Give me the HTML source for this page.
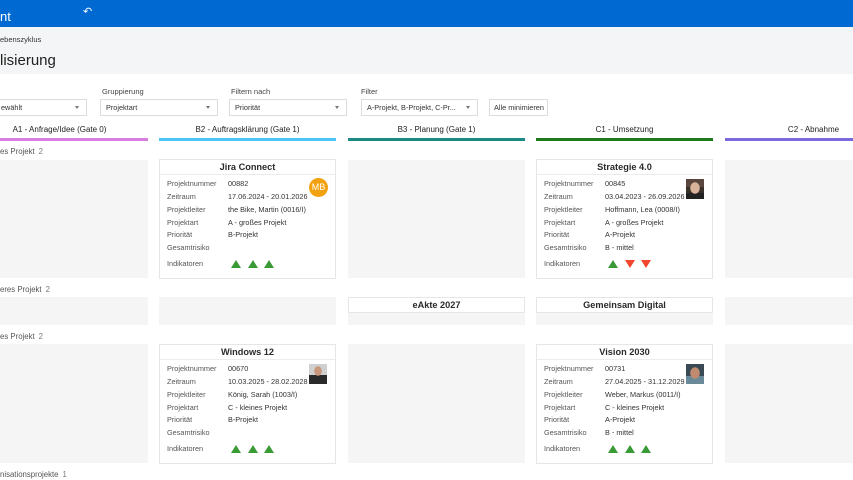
<!DOCTYPE html>
<html><head><meta charset="utf-8"><style>
*{margin:0;padding:0;box-sizing:border-box}
body{width:853px;height:480px;overflow:hidden;background:#fff;font-family:"Liberation Sans",sans-serif;position:relative;color:#333}
.a{position:absolute;white-space:nowrap}
.ph{position:absolute;background:#f5f5f5}
.card{position:absolute;background:#fff;border:1px solid #e6e6e6}
.card .t{height:15px;border-bottom:1px solid #ececec;text-align:center;font-size:9.2px;font-weight:bold;color:#2a2a2a;line-height:15px}
.card .r{position:absolute;left:7px;font-size:7.3px;color:#555;height:12px;line-height:12px}
.card .v{position:absolute;left:68px;font-size:7.3px;color:#333;line-height:12px}
.up{position:absolute;width:0;height:0;border-left:5.5px solid transparent;border-right:5.5px solid transparent;border-bottom:8px solid #3a9a35}
.dn{position:absolute;width:0;height:0;border-left:5.5px solid transparent;border-right:5.5px solid transparent;border-top:8px solid #f0472e}
.sel{position:absolute;top:99px;height:17px;border:1px solid #dcdcdc;background:#fff;font-size:7.3px;line-height:15px;padding-left:5px;color:#333}
.sel.d:after{content:"";position:absolute;right:7px;top:6px;border-left:2.5px solid transparent;border-right:2.5px solid transparent;border-top:3px solid #777}
.lbl{position:absolute;top:87px;font-size:7.5px;color:#444}
.ch{position:absolute;top:125px;font-size:8px;color:#222;text-align:center;width:177px}
.ln{position:absolute;top:138px;height:3px;width:177px}
.g{position:absolute;font-size:7.8px;color:#555}
.g b{font-weight:normal;color:#777;margin-left:4px}
.av{position:absolute;width:18px;height:20px}
.et{background:#fff;border:1px solid #e6e6e6;height:16px;text-align:center;font-size:9.2px;font-weight:bold;color:#2a2a2a;line-height:15px}
</style></head><body>
<div class="a" style="left:0;top:0;width:853px;height:27px;background:#0069d2"></div>
<div class="a" style="left:0;top:9px;color:#fff;font-size:13px">nt</div>
<div class="a" style="left:83px;top:5px;color:#fff;font-size:11px">&#8630;</div>
<div class="a" style="left:0;top:27px;width:853px;height:47px;background:#f4f5f7"></div>
<div class="a" style="left:0;top:35px;font-size:7.5px;color:#333">ebenszyklus</div>
<div class="a" style="left:0;top:52px;font-size:15px;color:#222">lisierung</div>

<div class="lbl" style="left:102px">Gruppierung</div>
<div class="lbl" style="left:231px">Filtern nach</div>
<div class="lbl" style="left:361px">Filter</div>
<div class="sel d" style="left:-5px;width:92px">ewählt</div>
<div class="sel d" style="left:100px;width:118px">Projektart</div>
<div class="sel d" style="left:229px;width:118px">Priorität</div>
<div class="sel d" style="left:361px;width:117px">A-Projekt, B-Projekt, C-Pr...</div>
<div class="sel" style="left:489px;width:59px;padding-left:4px">Alle minimieren</div>

<div class="ch" style="left:-29px">A1 - Anfrage/Idee (Gate 0)</div>
<div class="ch" style="left:159px">B2 - Auftragsklärung (Gate 1)</div>
<div class="ch" style="left:348px">B3 - Planung (Gate 1)</div>
<div class="ch" style="left:536px">C1 - Umsetzung</div>
<div class="ch" style="left:725px">C2 - Abnahme</div>
<div class="ln" style="left:-29px;background:#d77de0"></div>
<div class="ln" style="left:159px;background:#4cc4f5"></div>
<div class="ln" style="left:348px;background:#1b8a86"></div>
<div class="ln" style="left:536px;background:#1d7a1d"></div>
<div class="ln" style="left:725px;background:#7a68e0"></div>

<div class="g" style="left:0;top:147px">es Projekt<b>2</b></div>
<div class="g" style="left:0;top:285px">eres Projekt<b>2</b></div>
<div class="g" style="left:0;top:332px">es Projekt<b>2</b></div>
<div class="g" style="left:0;top:470px">nisationsprojekte<b>1</b></div>

<div class="ph" style="left:-29px;top:160px;width:177px;height:118px"></div>
<div class="ph" style="left:348px;top:160px;width:177px;height:118px"></div>
<div class="ph" style="left:725px;top:160px;width:177px;height:118px"></div>
<div class="card" style="left:159px;top:159px;width:177px;height:120px">
<div class="t">Jira Connect</div>
<div class="r" style="top:18px">Projektnummer</div><div class="v" style="top:18px">00882</div>
<div class="r" style="top:31px">Zeitraum</div><div class="v" style="top:31px">17.06.2024 - 20.01.2026</div>
<div class="r" style="top:44px">Projektleiter</div><div class="v" style="top:44px">the Bike, Martin (0016/I)</div>
<div class="r" style="top:57px">Projektart</div><div class="v" style="top:57px">A - großes Projekt</div>
<div class="r" style="top:69px">Priorität</div><div class="v" style="top:69px">B-Projekt</div>
<div class="r" style="top:82px">Gesamtrisiko</div>
<div class="r" style="top:98px">Indikatoren</div>
<div class="up" style="left:71px;top:100px"></div><div class="up" style="left:88px;top:100px"></div><div class="up" style="left:104px;top:100px"></div>
<div style="position:absolute;left:149px;top:18px;width:19px;height:19px;border-radius:50%;background:#f3a20f;color:#fff;font-size:9px;line-height:19px;text-align:center">MB</div>
</div>
<div class="card" style="left:536px;top:159px;width:177px;height:120px">
<div class="t">Strategie 4.0</div>
<div class="r" style="top:18px">Projektnummer</div><div class="v" style="top:18px">00845</div>
<div class="r" style="top:31px">Zeitraum</div><div class="v" style="top:31px">03.04.2023 - 26.09.2026</div>
<div class="r" style="top:44px">Projektleiter</div><div class="v" style="top:44px">Hoffmann, Lea (0008/I)</div>
<div class="r" style="top:57px">Projektart</div><div class="v" style="top:57px">A - großes Projekt</div>
<div class="r" style="top:69px">Priorität</div><div class="v" style="top:69px">A-Projekt</div>
<div class="r" style="top:82px">Gesamtrisiko</div><div class="v" style="top:82px">B - mittel</div>
<div class="r" style="top:98px">Indikatoren</div>
<div class="up" style="left:71px;top:100px"></div><div class="dn" style="left:88px;top:100px"></div><div class="dn" style="left:104px;top:100px"></div>
<div class="av" style="left:149px;top:19px;background:radial-gradient(ellipse 5px 6px at 50% 45%,#d8b39a 90%,transparent 100%),linear-gradient(#5a463c 0 40%,#3a302a 40% 70%,#222 70%)"></div>
</div>

<div class="ph" style="left:-29px;top:297px;width:177px;height:28px"></div>
<div class="ph" style="left:159px;top:297px;width:177px;height:28px"></div>
<div class="ph" style="left:348px;top:297px;width:177px;height:28px"><div class="et">eAkte 2027</div></div>
<div class="ph" style="left:536px;top:297px;width:177px;height:28px"><div class="et">Gemeinsam Digital</div></div>
<div class="ph" style="left:725px;top:297px;width:177px;height:28px"></div>

<div class="ph" style="left:-29px;top:344px;width:177px;height:119px"></div>
<div class="ph" style="left:348px;top:344px;width:177px;height:119px"></div>
<div class="ph" style="left:725px;top:344px;width:177px;height:119px"></div>
<div class="card" style="left:159px;top:344px;width:177px;height:120px">
<div class="t">Windows 12</div>
<div class="r" style="top:18px">Projektnummer</div><div class="v" style="top:18px">00670</div>
<div class="r" style="top:31px">Zeitraum</div><div class="v" style="top:31px">10.03.2025 - 28.02.2028</div>
<div class="r" style="top:44px">Projektleiter</div><div class="v" style="top:44px">König, Sarah (1003/I)</div>
<div class="r" style="top:57px">Projektart</div><div class="v" style="top:57px">C - kleines Projekt</div>
<div class="r" style="top:69px">Priorität</div><div class="v" style="top:69px">B-Projekt</div>
<div class="r" style="top:82px">Gesamtrisiko</div>
<div class="r" style="top:98px">Indikatoren</div>
<div class="up" style="left:71px;top:100px"></div><div class="up" style="left:88px;top:100px"></div><div class="up" style="left:104px;top:100px"></div>
<div class="av" style="left:149px;top:19px;background:radial-gradient(ellipse 4px 5px at 50% 35%,#c9987c 90%,transparent 100%),linear-gradient(#d0d0d0 0 55%,#2a2a2a 55%)"></div>
</div>
<div class="card" style="left:536px;top:344px;width:177px;height:120px">
<div class="t">Vision 2030</div>
<div class="r" style="top:18px">Projektnummer</div><div class="v" style="top:18px">00731</div>
<div class="r" style="top:31px">Zeitraum</div><div class="v" style="top:31px">27.04.2025 - 31.12.2029</div>
<div class="r" style="top:44px">Projektleiter</div><div class="v" style="top:44px">Weber, Markus (0011/I)</div>
<div class="r" style="top:57px">Projektart</div><div class="v" style="top:57px">C - kleines Projekt</div>
<div class="r" style="top:69px">Priorität</div><div class="v" style="top:69px">A-Projekt</div>
<div class="r" style="top:82px">Gesamtrisiko</div><div class="v" style="top:82px">B - mittel</div>
<div class="r" style="top:98px">Indikatoren</div>
<div class="up" style="left:71px;top:100px"></div><div class="up" style="left:88px;top:100px"></div><div class="up" style="left:104px;top:100px"></div>
<div class="av" style="left:149px;top:19px;background:radial-gradient(ellipse 5px 6px at 50% 45%,#c08a6e 90%,transparent 100%),linear-gradient(#3a4a55 0 60%,#6a8a9a 60%)"></div>
</div>
</body></html>
